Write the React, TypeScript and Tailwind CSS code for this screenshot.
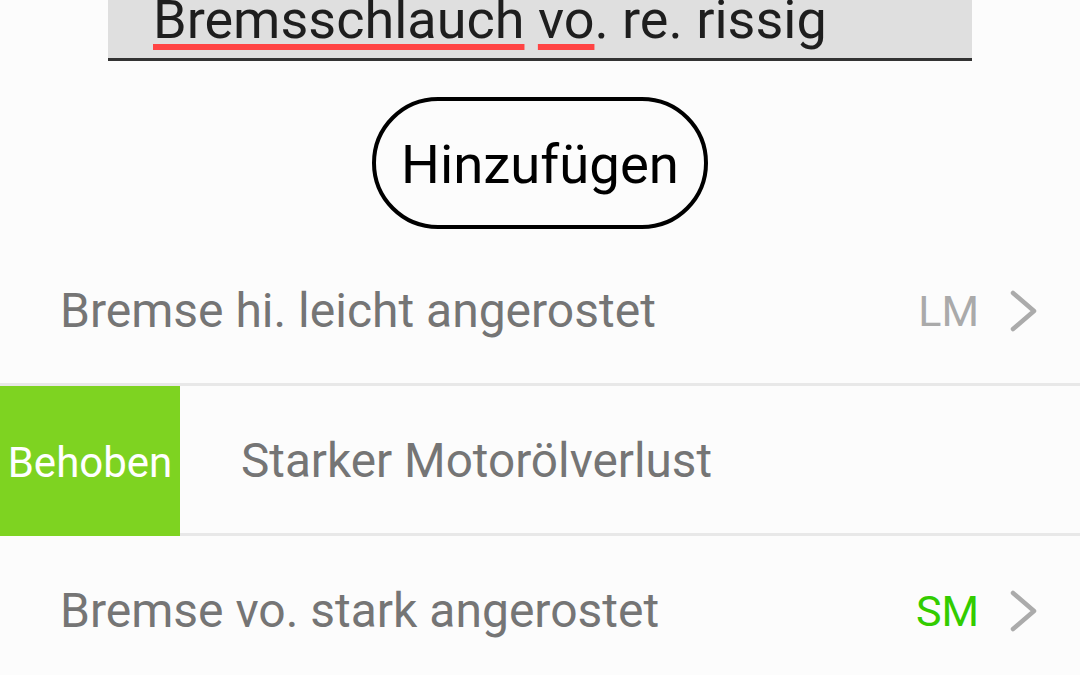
import React from "react";

function Chevron() {
  return (
    <svg width="30" height="42" viewBox="0 0 30 42" fill="none">
      <path d="M4 3 L25 21 L4 39" stroke="#ababab" strokeWidth="4.5" strokeLinecap="round" strokeLinejoin="round" />
    </svg>
  );
}

export default function App() {
  return (
    <div
      className="w-[1080px] h-[675px] overflow-hidden bg-[#fcfcfc]"
      style={{ fontFamily: "Roboto, 'Noto Sans', sans-serif" }}
    >
      <div className="mx-[108px] h-[61px] bg-[#dfdfdf] border-b-[3px] border-[#333333] overflow-hidden">
        <div className="pl-[45px] mt-[-7px] text-[54px] leading-[54px] text-[#1e1e1e] whitespace-nowrap">
          <span className="underline decoration-[#ff4444] decoration-[6px] underline-offset-[6px] [text-decoration-skip-ink:none]">Bremsschlauch</span>{" "}
          <span className="underline decoration-[#ff4444] decoration-[6px] underline-offset-[6px] [text-decoration-skip-ink:none]">vo</span>. re. rissig
        </div>
      </div>
      <div className="flex justify-center mt-[36px]">
        <div className="w-[336px] h-[132px] pt-[4px] rounded-full border-[4px] border-black flex items-center justify-center text-[54.5px] text-black">
          Hinzufügen
        </div>
      </div>
      <div className="mt-[7px] h-[150px] pt-[3px] flex items-center justify-between pl-[60px] pr-[41px] border-b-[3px] border-[#e8e8e8]">
        <span className="text-[48px] text-[#757575]">Bremse hi. leicht angerostet</span>
        <div className="flex items-center gap-[30px]">
          <span className="text-[43px] text-[#aaaaaa]">LM</span>
          <Chevron />
        </div>
      </div>
      <div className="h-[150px] flex items-stretch">
        <div className="w-[180px] pt-[3px] bg-[#7ed321] flex items-center justify-center text-[42px] text-white">Behoben</div>
        <div className="flex-1 flex items-center pt-[5px] pl-[61px] text-[47.7px] text-[#757575] border-b-[3px] border-[#e8e8e8]">Starker Motorölverlust</div>
      </div>
      <div className="h-[150px] flex items-center justify-between pl-[60px] pr-[41px]">
        <span className="text-[48px] text-[#757575]">Bremse vo. stark angerostet</span>
        <div className="flex items-center gap-[30px]">
          <span className="text-[43px] text-[#33cc00]">SM</span>
          <Chevron />
        </div>
      </div>
    </div>
  );
}
